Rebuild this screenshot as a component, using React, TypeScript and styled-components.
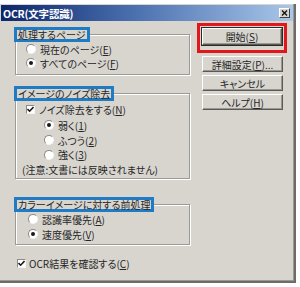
import React from "react";
import styled, { createGlobalStyle } from "styled-components";

const Global = createGlobalStyle`
  html, body { margin: 0; padding: 0; background: #ffffff; }
  body { font-family: "Noto Sans CJK JP", "Liberation Sans", sans-serif; }
`;

const BG = "#d8d5cf";
const FONT = `"Noto Sans CJK JP", "Liberation Sans", sans-serif`;

const Window = styled.div`
  margin-top: 4px;
  width: 296px;
  height: 279px;
  box-sizing: border-box;
  background: ${BG};
  border-right: 2px solid #6e6c68;
  border-bottom: 2px solid #6e6c68;
  box-shadow: inset -1px -1px 0 #9a9893;
  display: flex;
  flex-direction: column;
  font-family: ${FONT};
  font-feature-settings: "palt";
  font-size: 10px;
  color: #262626;
`;

const TitleBar = styled.div`
  height: 16px;
  margin: 1px 1px 0 1px;
  display: flex;
  align-items: center;
  justify-content: space-between;
  padding: 0 3px 0 2px;
  background: linear-gradient(90deg, #0c266c 0%, #4a6fae 45%, #a9c7ea 100%);
`;

const Title = styled.span`
  color: #ffffff;
  font-weight: bold;
  font-size: 10.5px;
  letter-spacing: -0.2px;
`;

const CloseBtn = styled.span`
  width: 11px;
  height: 10px;
  box-sizing: border-box;
  background: ${BG};
  border: 1px solid;
  border-color: #ffffff #404040 #404040 #ffffff;
  display: flex;
  align-items: center;
  justify-content: center;
`;

const Body = styled.div`
  display: flex;
  padding: 0 0 0 15px;
  gap: 7px;
`;

const LeftCol = styled.div`
  width: 175px;
  display: flex;
  flex-direction: column;
`;

const Group = styled.fieldset<{ $top: number; $pb: number }>`
  margin: ${(p) => p.$top}px 0 0 0;
  padding: 0 0 ${(p) => p.$pb}px 0;
  border: 1px solid #9c9a96;
  box-shadow: inset 1px 1px 0 #ffffff, 1px 1px 0 #ffffff;
  min-width: 0;
`;

const Legend = styled.legend`
  margin-left: -2px;
  padding: 0 1px;
  border: 3px solid #1f7cc4;
  background: ${BG};
  line-height: 9px;
  font-size: 10px;
  height: 9px;
`;

const Row = styled.div<{ $indent: number; $h?: number }>`
  display: flex;
  align-items: center;
  height: ${(p) => p.$h ?? 14}px;
  padding-left: ${(p) => p.$indent}px;
  gap: 4px;
  white-space: nowrap;
`;

const RadioCircle = styled.span<{ $on?: boolean }>`
  width: 10px;
  height: 10px;
  box-sizing: border-box;
  border-radius: 50%;
  border: 1px solid;
  border-color: #8c8a86 #f4f4f4 #f4f4f4 #8c8a86;
  background: #ffffff;
  display: flex;
  align-items: center;
  justify-content: center;
  &::after {
    content: "";
    width: 4px;
    height: 4px;
    border-radius: 50%;
    background: ${(p) => (p.$on ? "#1a1a1a" : "transparent")};
  }
`;

const CheckBox = styled.span`
  width: 9px;
  height: 9px;
  box-sizing: border-box;
  border: 1px solid;
  border-color: #8c8a86 #f4f4f4 #f4f4f4 #8c8a86;
  background: #ffffff;
  display: flex;
  align-items: center;
  justify-content: center;
`;

const Note = styled.div`
  height: 14px;
  display: flex;
  align-items: center;
  padding-left: 6px;
  white-space: nowrap;
`;

const BottomCheck = styled.div`
  margin-top: 11px;
  display: flex;
  align-items: center;
  gap: 3px;
  height: 14px;
  padding-left: 2px;
  white-space: nowrap;
`;

const RightCol = styled.div`
  display: flex;
  flex-direction: column;
  padding-top: 2px;
`;

const Highlight = styled.div`
  width: 90px;
  box-sizing: border-box;
  border: 3px solid #e3161c;
  padding: 2px 3px 2px 2px;
  margin-bottom: 3px;
`;

const Button = styled.div<{ $default?: boolean }>`
  width: ${(p) => (p.$default ? 80 : 81)}px;
  height: ${(p) => (p.$default ? 17 : 16)}px;
  margin-left: ${(p) => (p.$default ? 0 : 5)}px;
  margin-bottom: 3px;
  box-sizing: border-box;
  background: ${BG};
  border: 1px solid;
  border-color: #ffffff #5a5955 #5a5955 #ffffff;
  box-shadow: ${(p) =>
    p.$default
      ? "0 0 0 1px #2a2a2a, inset -1px -1px 0 #9a9893"
      : "inset -1px -1px 0 #9a9893"};
  display: flex;
  align-items: center;
  justify-content: center;
  white-space: nowrap;
  font-size: 10px;
`;

const Check = () => (
  <svg width="7" height="7" viewBox="0 0 7 7">
    <path d="M0.5 3 L2.6 5.2 L6.5 1" fill="none" stroke="#1a1a1a" strokeWidth="1.6" />
  </svg>
);

const Radio = ({ on, children, indent, h }: { on?: boolean; children: React.ReactNode; indent: number; h?: number }) => (
  <Row $indent={indent} $h={h}>
    <RadioCircle $on={on} />
    <span>{children}</span>
  </Row>
);

export default function App() {
  return (
    <>
      <Global />
      <Window>
        <TitleBar>
          <Title>OCR(文字認識)</Title>
          <CloseBtn>
            <svg width="7" height="6" viewBox="0 0 7 6">
              <path d="M1 0.5 L6 5.5 M6 0.5 L1 5.5" stroke="#111" strokeWidth="1.4" />
            </svg>
          </CloseBtn>
        </TitleBar>
        <Body>
          <LeftCol>
            <Group $top={6} $pb={4}>
              <Legend>処理するページ</Legend>
              <Radio indent={10}>現在のページ(<u>E</u>)</Radio>
              <Radio indent={10} on>すべてのページ(<u>F</u>)</Radio>
            </Group>
            <Group $top={11} $pb={2}>
              <Legend>イメージのノイズ除去</Legend>
              <Row $indent={10} $h={16}>
                <CheckBox><Check /></CheckBox>
                <span>ノイズ除去をする(<u>N</u>)</span>
              </Row>
              <Radio indent={28} h={16} on>弱く(<u>1</u>)</Radio>
              <Radio indent={28} h={14}>ふつう(<u>2</u>)</Radio>
              <Radio indent={28} h={15}>強く(<u>3</u>)</Radio>
              <Note>(注意:文書には反映されません)</Note>
            </Group>
            <Group $top={18} $pb={2}>
              <Legend>カラーイメージに対する前処理</Legend>
              <Radio indent={12} h={14}>認識率優先(<u>A</u>)</Radio>
              <Radio indent={12} h={16} on>速度優先(<u>V</u>)</Radio>
            </Group>
            <BottomCheck>
              <CheckBox><Check /></CheckBox>
              <span>OCR結果を確認する(<u>C</u>)</span>
            </BottomCheck>
          </LeftCol>
          <RightCol>
            <Highlight>
              <Button $default>開始(<u>S</u>)</Button>
            </Highlight>
            <Button>詳細設定(<u>P</u>)...</Button>
            <Button>キャンセル</Button>
            <Button>ヘルプ(<u>H</u>)</Button>
          </RightCol>
        </Body>
      </Window>
    </>
  );
}
